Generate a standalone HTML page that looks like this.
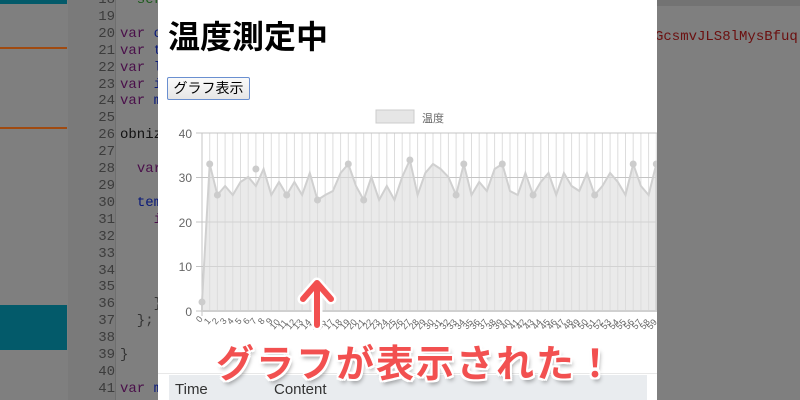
<!DOCTYPE html>
<html><head><meta charset="utf-8"><style>
body{margin:0;width:800px;height:400px;overflow:hidden;background:#7f7f7f;position:relative;font-family:"Liberation Sans","Noto Sans CJK JP",sans-serif}
.abs{position:absolute}
.code{font-family:"Liberation Mono","DejaVu Sans Mono",monospace;font-size:14px;line-height:16.9px}
</style></head><body>
<div class="abs" style="left:0;top:0;width:67px;height:4px;background:#035a6a"></div>
<div class="abs" style="left:0;top:47px;width:67px;height:2px;background:#a04a10"></div>
<div class="abs" style="left:0;top:127px;width:67px;height:2px;background:#a04a10"></div>
<div class="abs" style="left:0;top:305px;width:67px;height:45px;background:#035a6a"></div>
<div class="abs" style="left:68px;top:0;width:48px;height:400px;background:#7a7a7a"></div>
<div class="abs" style="left:115px;top:0;width:1px;height:400px;background:#6e6e6e"></div>
<div class="abs" style="left:657px;top:0;width:143px;height:6px;background:#737373"></div>
<div class="abs code" style="left:655px;top:29px;color:#6b0f0f;white-space:nowrap">GcsmvJLS8lMysBfuq--H</div>
<div class="abs code" style="left:95px;top:-8px;color:#333;width:420px">
<div style="position:absolute;left:-25px;top:0;width:45px;text-align:right;color:#3c3c3c">18<br>19<br>20<br>21<br>22<br>23<br>24<br>25<br>26<br>27<br>28<br>29<br>30<br>31<br>32<br>33<br>34<br>35<br>36<br>37<br>38<br>39<br>40<br>41</div>
<div style="position:absolute;left:25px;top:0;white-space:pre"><span style="color:#1a5a1a">  ser</span>

<span style="color:#4a0f4a">var</span> <span style="color:#0a1a7a">ob</span>
<span style="color:#4a0f4a">var</span> <span style="color:#0a1a7a">te</span>
<span style="color:#4a0f4a">var</span> <span style="color:#0a1a7a">la</span>
<span style="color:#4a0f4a">var</span> <span style="color:#0a1a7a">i</span>
<span style="color:#4a0f4a">var</span> <span style="color:#0a1a7a">my</span>

<span style="color:#111">obniz</span>

  <span style="color:#4a0f4a">var</span>

  <span style="color:#0a1a7a">temp</span>
    <span style="color:#4a0f4a">if</span>




    }
  };

}

<span style="color:#4a0f4a">var</span> <span style="color:#0a1a7a">my</span></div></div>
<div class="abs" style="left:158px;top:0;width:499px;height:400px;background:#fff"></div>
<div class="abs" style="left:168px;top:12px;font-size:32px;font-weight:bold;color:#000;white-space:nowrap">温度測定中</div>
<div class="abs" style="left:167px;top:77px;width:81px;height:21px;border:1px solid #6a8fd0;border-radius:2px;background:linear-gradient(#fafafa,#e6e6e6);font-size:14px;line-height:21px;text-align:center;color:#000">グラフ表示</div>
<svg class="abs" style="left:158px;top:100px" width="499" height="240" viewBox="158 100 499 240" font-family="Liberation Sans,Noto Sans CJK JP,sans-serif">
<rect x="376" y="110" width="38" height="13" fill="#e6e6e6" stroke="#ccc"/>
<text x="422" y="122" font-size="11" fill="#666">温度</text>
<g fill="#666" font-size="12" text-anchor="end"><text x="192" y="138">40</text><text x="192" y="182">30</text><text x="192" y="227">20</text><text x="192" y="271">10</text><text x="192" y="316">0</text></g>
<path d="M202,133V311 M209.7,133V311 M217.4,133V311 M225.1,133V311 M232.8,133V311 M240.5,133V311 M248.2,133V311 M255.9,133V311 M263.6,133V311 M271.3,133V311 M279,133V311 M286.7,133V311 M294.4,133V311 M302.1,133V311 M309.8,133V311 M317.5,133V311 M325.2,133V311 M332.9,133V311 M340.6,133V311 M348.3,133V311 M356,133V311 M363.7,133V311 M371.4,133V311 M379.1,133V311 M386.8,133V311 M394.5,133V311 M402.2,133V311 M409.9,133V311 M417.6,133V311 M425.3,133V311 M433,133V311 M440.7,133V311 M448.4,133V311 M456.1,133V311 M463.8,133V311 M471.5,133V311 M479.2,133V311 M486.9,133V311 M494.6,133V311 M502.3,133V311 M510,133V311 M517.7,133V311 M525.4,133V311 M533.1,133V311 M540.8,133V311 M548.5,133V311 M556.2,133V311 M563.9,133V311 M571.6,133V311 M579.3,133V311 M587,133V311 M594.7,133V311 M602.4,133V311 M610.1,133V311 M617.8,133V311 M625.5,133V311 M633.2,133V311 M640.9,133V311 M648.6,133V311 M656.3,133V311" stroke="#ddd" stroke-width="1"/>
<path d="M196,133H657M196,177.5H657M196,222H657M196,266.5H657M196,311H657M202,133V316" stroke="#c4c4c4"/>
<polygon fill="rgba(220,220,220,0.6)" stroke="#d0d0d0" stroke-width="2" points="202,311 202,302 209.7,164 217.4,195 225.1,186 232.8,195 240.5,182 248.2,177 255.9,186 263.6,169 271.3,195 279,182 286.7,195 294.4,182 302.1,195 309.8,173 317.5,200 325.2,195 332.9,191 340.6,173 348.3,164 356,186 363.7,200 371.4,177 379.1,200 386.8,186 394.5,200 402.2,177 409.9,160 417.6,195 425.3,173 433,164 440.7,169 448.4,177 456.1,195 463.8,164 471.5,195 479.2,182 486.9,191 494.6,169 502.3,164 510,191 517.7,195 525.4,173 533.1,195 540.8,182 548.5,173 556.2,195 563.9,173 571.6,186 579.3,191 587,173 594.7,195 602.4,186 610.1,173 617.8,182 625.5,195 633.2,164 640.9,186 648.6,195 656.3,164 656.3,311"/>
<g fill="#ccc"><circle cx="209.7" cy="164" r="3.5"/><circle cx="255.9" cy="169" r="3.5"/><circle cx="348.3" cy="164" r="3.5"/><circle cx="409.9" cy="160" r="3.5"/><circle cx="463.8" cy="164" r="3.5"/><circle cx="502.3" cy="164" r="3.5"/><circle cx="217.4" cy="195" r="3.5"/><circle cx="286.7" cy="195" r="3.5"/><circle cx="363.7" cy="200" r="3.5"/><circle cx="456.1" cy="195" r="3.5"/><circle cx="533.1" cy="195" r="3.5"/><circle cx="594.7" cy="195" r="3.5"/><circle cx="317.5" cy="200" r="3.5"/><circle cx="202" cy="302" r="3.5"/><circle cx="633.2" cy="164" r="3.5"/><circle cx="656.3" cy="164" r="3.5"/></g>
<g fill="#666" font-size="9">
<text transform="translate(200,323) rotate(-50)">0</text><text transform="translate(208,325) rotate(-50)">1</text><text transform="translate(216,325) rotate(-50)">2</text><text transform="translate(224,325) rotate(-50)">3</text><text transform="translate(231,325) rotate(-50)">4</text><text transform="translate(239,325) rotate(-50)">5</text><text transform="translate(247,325) rotate(-50)">6</text><text transform="translate(254,325) rotate(-50)">7</text><text transform="translate(262,325) rotate(-50)">8</text><text transform="translate(270,325) rotate(-50)">9</text>
<text transform="translate(274,330) rotate(-50)">10</text><text transform="translate(282,330) rotate(-50)">11</text><text transform="translate(290,330) rotate(-50)">12</text><text transform="translate(297,330) rotate(-50)">13</text><text transform="translate(305,330) rotate(-50)">14</text><text transform="translate(313,330) rotate(-50)">15</text><text transform="translate(320,330) rotate(-50)">16</text><text transform="translate(328,330) rotate(-50)">17</text><text transform="translate(336,330) rotate(-50)">18</text><text transform="translate(344,330) rotate(-50)">19</text><text transform="translate(351,330) rotate(-50)">20</text><text transform="translate(359,330) rotate(-50)">21</text><text transform="translate(367,330) rotate(-50)">22</text><text transform="translate(374,330) rotate(-50)">23</text><text transform="translate(382,330) rotate(-50)">24</text><text transform="translate(390,330) rotate(-50)">25</text><text transform="translate(397,330) rotate(-50)">26</text><text transform="translate(405,330) rotate(-50)">27</text><text transform="translate(413,330) rotate(-50)">28</text><text transform="translate(420,330) rotate(-50)">29</text><text transform="translate(428,330) rotate(-50)">30</text><text transform="translate(436,330) rotate(-50)">31</text><text transform="translate(444,330) rotate(-50)">32</text><text transform="translate(451,330) rotate(-50)">33</text><text transform="translate(459,330) rotate(-50)">34</text><text transform="translate(467,330) rotate(-50)">35</text><text transform="translate(474,330) rotate(-50)">36</text><text transform="translate(482,330) rotate(-50)">37</text><text transform="translate(490,330) rotate(-50)">38</text><text transform="translate(497,330) rotate(-50)">39</text><text transform="translate(505,330) rotate(-50)">40</text><text transform="translate(513,330) rotate(-50)">41</text><text transform="translate(520,330) rotate(-50)">42</text><text transform="translate(528,330) rotate(-50)">43</text><text transform="translate(536,330) rotate(-50)">44</text><text transform="translate(544,330) rotate(-50)">45</text><text transform="translate(551,330) rotate(-50)">46</text><text transform="translate(559,330) rotate(-50)">47</text><text transform="translate(567,330) rotate(-50)">48</text><text transform="translate(574,330) rotate(-50)">49</text><text transform="translate(582,330) rotate(-50)">50</text><text transform="translate(590,330) rotate(-50)">51</text><text transform="translate(597,330) rotate(-50)">52</text><text transform="translate(605,330) rotate(-50)">53</text><text transform="translate(613,330) rotate(-50)">54</text><text transform="translate(620,330) rotate(-50)">55</text><text transform="translate(628,330) rotate(-50)">56</text><text transform="translate(636,330) rotate(-50)">57</text><text transform="translate(644,330) rotate(-50)">58</text><text transform="translate(651,330) rotate(-50)">59</text>
</g>
</svg>
<div class="abs" style="left:158px;top:373px;width:499px;height:1px;background:#e8e8e8"></div>
<div class="abs" style="left:169px;top:375px;width:478px;height:25px;background:#e9ecef;font-size:15px;color:#333"><span class="abs" style="left:6px;top:6px">Time</span><span class="abs" style="left:105px;top:6px">Content</span></div>
<svg class="abs" style="left:295px;top:275px" width="44" height="58" viewBox="0 0 44 58">
<path d="M22,50V10M8,24L22,8L36,24" fill="none" stroke="#fff" stroke-width="11" stroke-linecap="round" stroke-linejoin="round"/>
<path d="M22,50V10M8,24L22,8L36,24" fill="none" stroke="#f25050" stroke-width="6" stroke-linecap="round" stroke-linejoin="round"/>
</svg>
<div class="abs" style="left:216px;top:333px;font-size:38px;font-weight:bold;color:#f25050;letter-spacing:2px;white-space:nowrap;text-shadow:2px 0 0 #fff,-2px 0 0 #fff,0 2px 0 #fff,0 -2px 0 #fff,2px 2px 0 #fff,-2px -2px 0 #fff,2px -2px 0 #fff,-2px 2px 0 #fff,2px 4px 4px rgba(0,0,0,.35);font-family:'Noto Sans CJK JP',sans-serif">グラフが表示された！</div>
</body></html>
